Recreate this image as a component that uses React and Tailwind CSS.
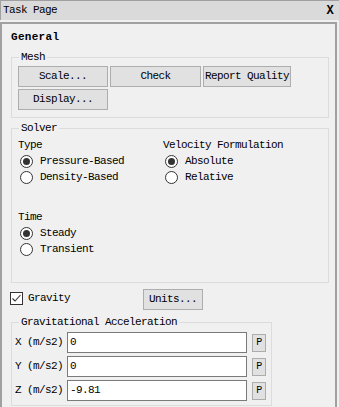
import React from 'react';

const font = { fontFamily: '"Liberation Mono", "DejaVu Sans Mono", monospace' };

const Button = ({ children, className = '' }) => (
  <div
    className={`h-[21px] border border-[#adadad] bg-[#e1e1e1] flex items-center justify-center text-[#000] ${className}`}
  >
    {children}
  </div>
);

const Radio = ({ checked, label }) => (
  <div className="h-[16px] flex items-center">
    <span className="ml-[2px] w-[13px] h-[13px] rounded-full border border-[#333] bg-white flex items-center justify-center">
      {checked && <span className="w-[7px] h-[7px] rounded-full bg-[#333]"></span>}
    </span>
    <span className="ml-[7px]">{label}</span>
  </div>
);

const Group = ({ label, className = '', children }) => (
  <div className={`relative border border-[#dcdcdc] ${className}`}>
    <span className="absolute -top-[8px] left-[7px] px-[2px] bg-[#f0f0f0] leading-[14px]">{label}</span>
    {children}
  </div>
);

const AxisRow = ({ axis, value }) => (
  <div className="flex items-center h-[21px]">
    <span className="w-[52px]">{axis} (m/s2)</span>
    <div className="w-[180px] h-[21px] border border-[#7a7a7a] bg-white flex items-center pl-[2px]">
      {value}
    </div>
    <div className="ml-[5px] w-[14px] h-[18px] border border-[#adadad] bg-[#e1e1e1] flex items-center justify-center text-[10px]">
      P
    </div>
  </div>
);

export default function App() {
  return (
    <div
      className="w-[339px] h-[407px] overflow-hidden bg-[#f0f0f0] text-[11px] tracking-[-0.6px] text-[#000]"
      style={font}
    >
      {/* Title bar */}
      <div className="h-[20px] bg-[#dadada] border-t border-l border-[#a0a0a0] flex items-center justify-between pl-[2px] pr-[6px]">
        <span>Task Page</span>
        <span className="text-[12px] font-semibold">X</span>
      </div>

      {/* Panel */}
      <div className="mt-[2px] h-[385px] w-[337px] border-t-2 border-l-2 border-r-2 border-[#a0a0a0] pl-[9px] pt-[5px]">
        <div className="h-[16px] flex items-center font-bold tracking-[0.3px]">General</div>

        <Group label="Mesh" className="mt-[12px] w-[318px] h-[61px] pt-[8px] pl-[6px]">
          <div className="flex gap-[2px]">
            <Button className="w-[90px]">Scale...</Button>
            <Button className="w-[91px]">Check</Button>
            <Button className="w-[88px]">Report Quality</Button>
          </div>
          <div className="flex mt-[2px]">
            <Button className="w-[90px]">Display...</Button>
          </div>
        </Group>

        <Group label="Solver" className="mt-[10px] w-[318px] h-[155px] pt-[8px] pl-[6px]">
          <div className="flex">
            <div className="w-[145px]">
              <div className="h-[16px] flex items-center">Type</div>
              <Radio checked label="Pressure-Based" />
              <Radio label="Density-Based" />
            </div>
            <div>
              <div className="h-[16px] flex items-center">Velocity Formulation</div>
              <Radio checked label="Absolute" />
              <Radio label="Relative" />
            </div>
          </div>
          <div className="mt-[24px]">
            <div className="h-[16px] flex items-center">Time</div>
            <Radio checked label="Steady" />
            <Radio label="Transient" />
          </div>
        </Group>

        <div className="mt-[6px] h-[21px] flex items-center -ml-[1px]">
          <div className="w-[133px] flex items-center self-start pt-[1px]">
            <span className="w-[13px] h-[13px] border border-[#333] bg-white flex items-center justify-center">
              <svg width="11" height="11" viewBox="0 0 11 11">
                <path d="M1.5 5.5 L4 8 L9.5 2" fill="none" stroke="#333" strokeWidth="1.1" />
              </svg>
            </span>
            <span className="ml-[5px]">Gravity</span>
          </div>
          <Button className="w-[60px]">Units...</Button>
        </div>

        <Group label="Gravitational Acceleration" className="mt-[12px] w-[261px] h-[84px] pt-[9px] pl-[3px]">
          <div className="flex flex-col gap-[3px]">
            <AxisRow axis="X" value="0" />
            <AxisRow axis="Y" value="0" />
            <AxisRow axis="Z" value="-9.81" />
          </div>
        </Group>
      </div>
    </div>
  );
}
